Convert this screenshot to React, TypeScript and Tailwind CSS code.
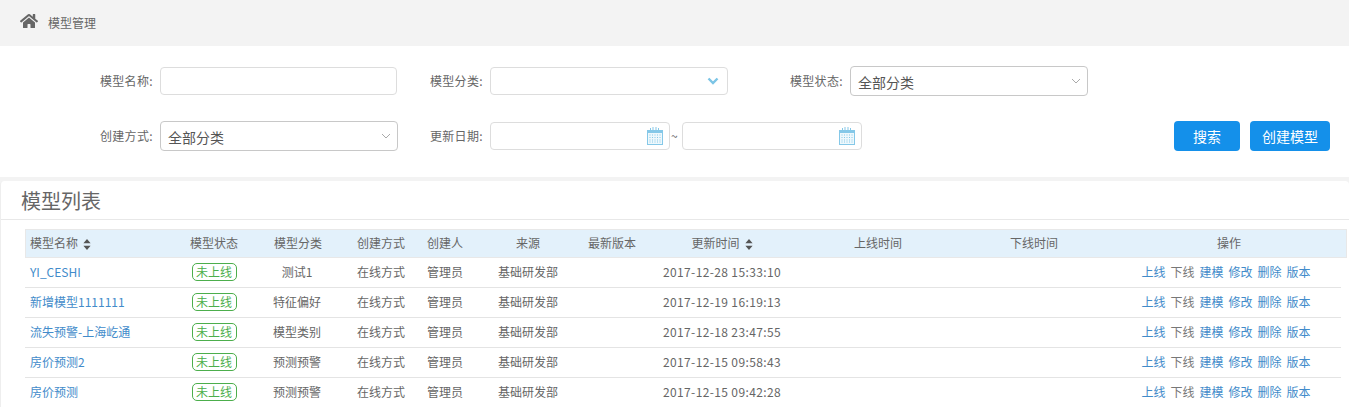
import { FaHome } from "react-icons/fa";

const font = "font-['Noto_Sans_CJK_SC','Noto_Sans',sans-serif]";
const cols = "grid grid-cols-[147px_84px_84px_82px_46px_120px_48px_172px_140px_172px_218px]";

function Calendar() {
  return (
    <svg width="16" height="18" viewBox="0 0 16 18" className="shrink-0">
      <path d="M0 3h3V1h1v2h1.5V0h1v3h2V0h1v3H11V1h1v2h4v15H0z" fill="#85c8e8" />
      <rect x="1" y="6" width="14" height="11" fill="#eef8fc" />
      {[8, 10.5, 13, 15].map((y) =>
        [3, 5.5, 8, 10.5, 13].map((x) => (
          <rect key={`${x}-${y}`} x={x - 0.5} y={y - 0.5} width="1" height="1" fill="#85c8e8" />
        ))
      )}
    </svg>
  );
}

function Chevron({ blue }: { blue?: boolean }) {
  return blue ? (
    <svg width="12" height="8" viewBox="0 0 12 8">
      <path d="M1.5 1.5 6 6l4.5-4.5" fill="none" stroke="#7cc5e6" strokeWidth="2.4" />
    </svg>
  ) : (
    <svg width="10" height="6" viewBox="0 0 10 6">
      <path d="M1 1l4 4 4-4" fill="none" stroke="#aaaaaa" strokeWidth="1" />
    </svg>
  );
}

function Sort() {
  return (
    <svg width="8" height="11" viewBox="0 0 8 11" className="ml-[5px] inline-block">
      <path d="M4 0l3.6 4.2H.4zM4 11 .4 6.8h7.2z" fill="#555555" />
    </svg>
  );
}

function Label({ children, className = "" }: { children: string; className?: string }) {
  return <span className={`w-[60px] shrink-0 text-xs tracking-[0.3px] text-[#666666] ${className}`}>{children}</span>;
}

function SelectBox({ w = "w-[238px]" }: { w?: string }) {
  return (
    <div className={`flex h-[30px] ${w} shrink-0 items-center justify-between rounded border border-[#c8c8c8] pl-[7px] pr-[6px] text-sm text-[#555555]`}>
      <span className="pt-[2px]">全部分类</span>
      <Chevron />
    </div>
  );
}

function Field({ className = "" }: { className?: string }) {
  return <div className={`h-[28px] rounded border border-[#dddddd] ${className}`} />;
}

function DateBox() {
  return (
    <div className="flex h-[28px] w-[180px] shrink-0 items-center justify-end rounded border border-[#dddddd] pr-[6px]">
      <Calendar />
    </div>
  );
}

const headers = ["模型状态", "模型分类", "创建方式", "创建人", "来源", "最新版本"];
const rows = [
  ["YI_CESHI", "测试1", "2017-12-28 15:33:10"],
  ["新增模型1111111", "特征偏好", "2017-12-19 16:19:13"],
  ["流失预警-上海屹通", "模型类别", "2017-12-18 23:47:55"],
  ["房价预测2", "预测预警", "2017-12-15 09:58:43"],
  ["房价预测", "预测预警", "2017-12-15 09:42:28"],
];

export default function App() {
  return (
    <div className={`${font} h-[407px] w-[1349px] overflow-hidden bg-white`}>
      <div className="flex h-[46px] items-center bg-[#f3f3f3] pl-[20px]">
        <FaHome className="mb-[4px] text-[18px] text-[#666666]" />
        <span className="ml-[10px] text-xs text-[#666666]">模型管理</span>
      </div>

      <div className="h-[131px] pl-[100px] pt-[20px]">
        <div className="flex h-[30px] items-center">
          <Label>模型名称:</Label>
          <Field className="w-[237px]" />
          <Label className="ml-[33px]">模型分类:</Label>
          <div className="flex h-[28px] w-[238px] items-center justify-end rounded border border-[#dddddd] pr-[8px]">
            <Chevron blue />
          </div>
          <Label className="ml-[62px]">模型状态:</Label>
          <SelectBox />
        </div>
        <div className="mt-[25px] flex h-[30px] items-center">
          <Label>创建方式:</Label>
          <SelectBox />
          <Label className="ml-[32px]">更新日期:</Label>
          <DateBox />
          <span className="w-[12px] pl-px text-xs text-[#666666]">~</span>
          <DateBox />
          <button className="ml-[312px] h-[30px] w-[66px] rounded bg-[#1490ea] text-sm text-white">搜索</button>
          <button className="ml-[10px] h-[30px] w-[80px] rounded bg-[#1490ea] text-sm text-white">创建模型</button>
        </div>
      </div>

      <div className="h-[230px] bg-[#f3f3f3] pt-[4px]">
        <div className="h-full rounded-tl rounded-tr border-l border-[#eeeeee] bg-white">
          <div className="flex h-[39px] items-center border-b border-[#e8e8e8] pl-[20px] pt-[2px] text-[20px] leading-none text-[#666666]">
            模型列表
          </div>
          <div className="ml-[24px] mt-[9px]">
            <div className={`${cols} h-[29px] w-[1322px] items-center bg-[#e3f1fb] pb-px text-xs text-[#666666] ring-1 ring-inset ring-[#e8e8e8]`}>
              <div className="pl-[5px]">模型名称<Sort /></div>
              {headers.map((h) => <div key={h} className="text-center">{h}</div>)}
              <div className="text-center">更新时间<Sort /></div>
              <div className="text-center">上线时间</div>
              <div className="text-center">下线时间</div>
              <div className="text-center">操作</div>
            </div>
            {rows.map((r) => (
              <div key={r[0]} className={`${cols} h-[30px] w-[1316px] items-center border-b border-[#e4e4e4] pb-px text-xs text-[#666666]`}>
                <div className="pl-[5px] text-[#428bca]">{r[0]}</div>
                <div className="flex justify-center">
                  <span className="flex h-[18px] w-[45px] items-center justify-center rounded-[5px] border border-[#4cae4c] text-[#4cae4c]">未上线</span>
                </div>
                <div className="pr-[2px] text-center">{r[1]}</div>
                <div className="text-center">在线方式</div>
                <div className="text-center">管理员</div>
                <div className="text-center">基础研发部</div>
                <div />
                <div className="whitespace-nowrap pl-[27px] tracking-[0.37px]">{r[2]}</div>
                <div />
                <div />
                <div className="flex justify-center gap-[5px] pr-[6px] text-[#428bca]">
                  <span>上线</span>
                  <span className="text-[#777777]">下线</span>
                  <span>建模</span>
                  <span>修改</span>
                  <span>删除</span>
                  <span>版本</span>
                </div>
              </div>
            ))}
          </div>
        </div>
      </div>
    </div>
  );
}
